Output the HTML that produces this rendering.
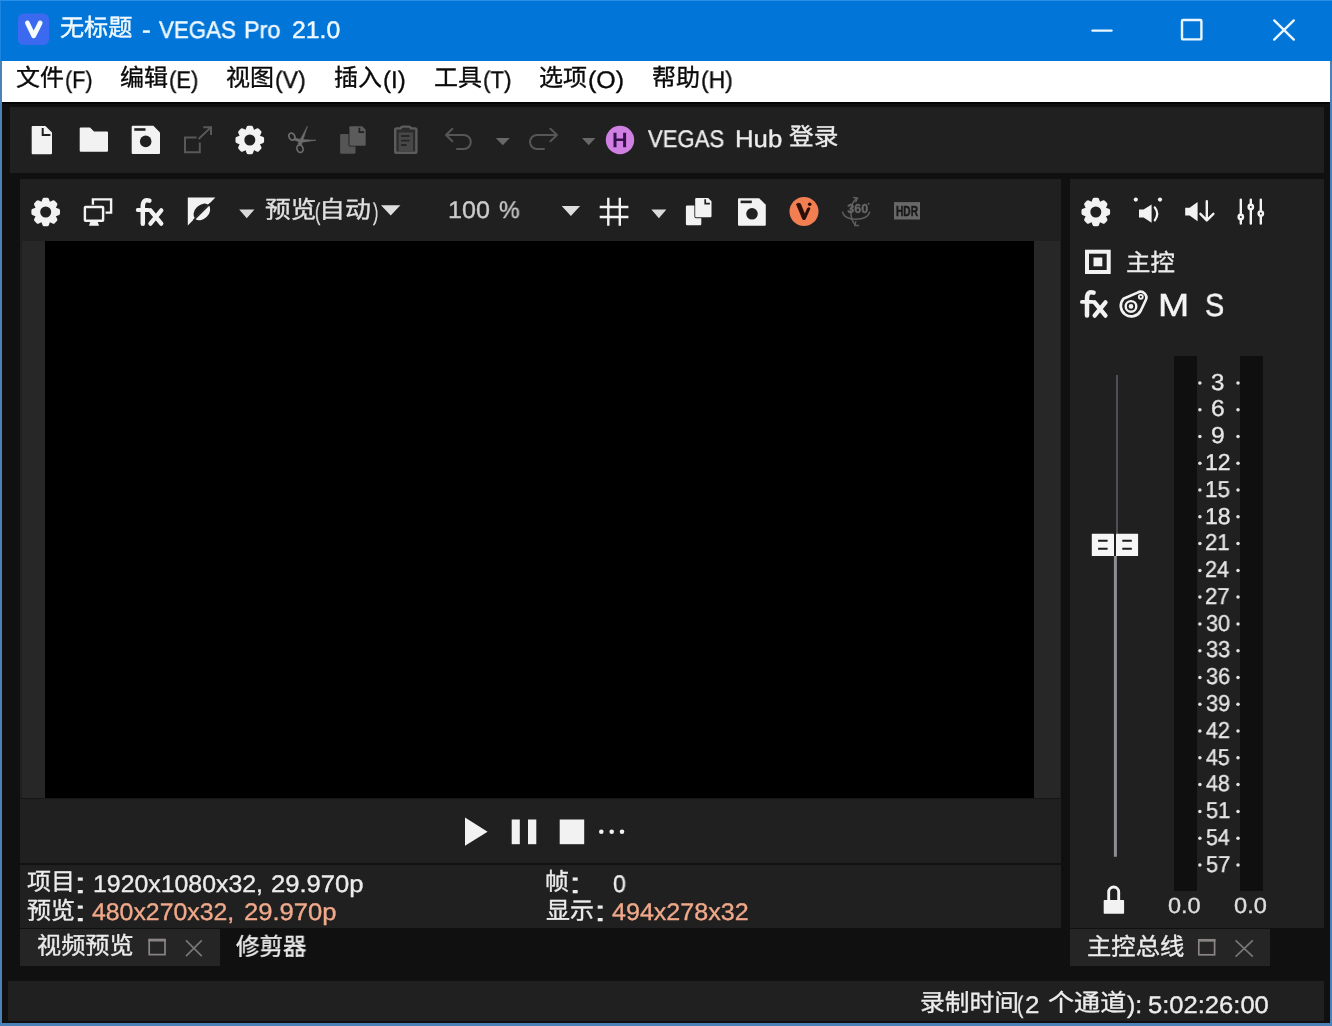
<!DOCTYPE html>
<html lang="zh-CN"><head><meta charset="utf-8"><title>无标题 - VEGAS Pro 21.0</title>
<style>
html,body{margin:0;padding:0;}
body{width:1332px;height:1026px;overflow:hidden;background:#4a81b6;position:relative;font-family:"Liberation Sans",sans-serif;}
#win{position:absolute;left:0;top:0;width:1332px;height:1026px;overflow:hidden;}
.abs,.t,.c,#icons{position:absolute;}
.t{white-space:pre;transform-origin:0 0;display:block;will-change:transform;text-rendering:geometricPrecision;font-kerning:none;-webkit-text-stroke:0.35px currentColor;}
.k{font-family:"Liberation Sans","Noto Sans CJK SC",sans-serif;font-size:24px;line-height:24px;}
.c{display:block;overflow:visible;}
#icons{will-change:transform;}
#titlebar{left:0;top:0;width:1332px;height:61px;background:#0276d8;box-shadow:inset 0 1px 0 #2a8fe6, inset 1px 0 0 #1a86e0;}
#menubar{left:2px;top:61px;width:1327.5px;height:41px;background:#fff;}
#client{left:2px;top:102px;width:1327.5px;height:921px;background:#101010;}
.panel{background:#202020;}
.strip{background:#272727;}
.tab{background:#252525;}
.trk{background:#0f0f0f;}
</style></head><body><div id="win">

<div id="titlebar" class="abs"></div>
<div id="menubar" class="abs"></div>
<div id="client" class="abs"></div>
<div class="abs" style="left:2px;top:102px;width:1327.5px;height:2px;background:#050505"></div>
<div id="maintoolbar" class="abs panel" style="left:10px;top:107px;width:1314px;height:66px"></div>
<div id="preview" class="abs panel" style="left:20px;top:179px;width:1041px;height:749px"></div>
<div class="abs strip" style="left:22px;top:241px;width:1037.5px;height:557px"></div>
<div class="abs" style="left:20px;top:798px;width:1041px;height:1px;background:#171717"></div>
<div id="screen" class="abs" style="left:45px;top:241px;width:989px;height:557px;background:#000"></div>
<div class="abs" style="left:20px;top:863px;width:1041px;height:2px;background:#121212"></div>
<div class="abs tab" style="left:20px;top:929px;width:200px;height:37px"></div>
<div id="master" class="abs panel" style="left:1070px;top:179px;width:254px;height:749px"></div>
<div class="abs tab" style="left:1070px;top:929px;width:200px;height:37px"></div>
<div class="abs trk" style="left:1174px;top:356px;width:23px;height:535px"></div>
<div class="abs trk" style="left:1240px;top:356px;width:23px;height:535px"></div>
<div id="statusbar" class="abs panel" style="left:8px;top:981px;width:1316px;height:40px"></div>
<svg id="icons" width="1332" height="1026" viewBox="0 0 1332 1026" style="left:0;top:0">
<rect x="18" y="13.6" width="31" height="31.4" rx="5.5" fill="#3b69f0"/>
<path d="M27.4,22.9 L33.7,35.9 L40.2,22.9" fill="none" stroke="#f4fcff" stroke-width="4.7" stroke-linecap="round" stroke-linejoin="round"/>
<g stroke="#eaf6ff" stroke-width="2.4" fill="none" stroke-linecap="round"><path d="M1092.5,30.6 H1111.5"/><rect x="1182" y="20" width="19.4" height="19.4" rx="1"/><path d="M1274.2,20.4 L1293.8,39.6 M1293.8,20.4 L1274.2,39.6"/></g>
<path d="M32.7,125.9 H45.4 L52,132.4 V153.2 Q52,154.2 51,154.2 H32.7 Q31.7,154.2 31.7,153.2 V126.9 Q31.7,125.9 32.7,125.9 Z" fill="#f2f2f2"/>
<path d="M42.7,128 V135 H50.4" fill="none" stroke="#202020" stroke-width="2"/>
<path d="M80.7,127.5 H90 L94,131.4 H107 Q108,131.4 108,132.4 V150.7 Q108,151.7 107,151.7 H80.7 Q79.7,151.7 79.7,150.7 V128.5 Q79.7,127.5 80.7,127.5 Z" fill="#f2f2f2"/>
<path d="M132.7,125.8 H153.4 L160.0,132.4 V153.1 Q160.0,154.1 159.0,154.1 H132.7 Q131.7,154.1 131.7,153.1 V126.8 Q131.7,125.8 132.7,125.8 Z" fill="#f2f2f2"/><rect x="134.29999999999998" y="128.2" width="11.2" height="2.6" fill="#202020"/><circle cx="145.7" cy="141.4" r="5.8" fill="#202020"/>
<g fill="none" stroke="#585858" stroke-width="2"><path d="M196.5,137.6 H185 V152.2 H199.8 V142.6"/><path d="M198.6,139 L210.6,127.6 M203.2,127.2 H211 V135"/></g>
<g transform="translate(249.8,140)" fill="#f2f2f2"><circle r="9.9"/><path transform="rotate(0.0)" d="M-5.20,-7.40 L-3.20,-12.90 Q-2.90,-14.30 -1.50,-14.30 H1.50 Q2.90,-14.30 3.20,-12.90 L5.20,-7.40 Z"/><path transform="rotate(45.0)" d="M-5.20,-7.40 L-3.20,-12.90 Q-2.90,-14.30 -1.50,-14.30 H1.50 Q2.90,-14.30 3.20,-12.90 L5.20,-7.40 Z"/><path transform="rotate(90.0)" d="M-5.20,-7.40 L-3.20,-12.90 Q-2.90,-14.30 -1.50,-14.30 H1.50 Q2.90,-14.30 3.20,-12.90 L5.20,-7.40 Z"/><path transform="rotate(135.0)" d="M-5.20,-7.40 L-3.20,-12.90 Q-2.90,-14.30 -1.50,-14.30 H1.50 Q2.90,-14.30 3.20,-12.90 L5.20,-7.40 Z"/><path transform="rotate(180.0)" d="M-5.20,-7.40 L-3.20,-12.90 Q-2.90,-14.30 -1.50,-14.30 H1.50 Q2.90,-14.30 3.20,-12.90 L5.20,-7.40 Z"/><path transform="rotate(225.0)" d="M-5.20,-7.40 L-3.20,-12.90 Q-2.90,-14.30 -1.50,-14.30 H1.50 Q2.90,-14.30 3.20,-12.90 L5.20,-7.40 Z"/><path transform="rotate(270.0)" d="M-5.20,-7.40 L-3.20,-12.90 Q-2.90,-14.30 -1.50,-14.30 H1.50 Q2.90,-14.30 3.20,-12.90 L5.20,-7.40 Z"/><path transform="rotate(315.0)" d="M-5.20,-7.40 L-3.20,-12.90 Q-2.90,-14.30 -1.50,-14.30 H1.50 Q2.90,-14.30 3.20,-12.90 L5.20,-7.40 Z"/><circle r="5.5" fill="#202020"/></g>
<g fill="none" stroke="#6c6c6c" stroke-width="1.7"><ellipse cx="291.9" cy="136.6" rx="2.8" ry="3.6" transform="rotate(-25 291.9 136.6)"/><ellipse cx="300" cy="148.7" rx="3" ry="3.8" transform="rotate(-20 300 148.7)"/></g><path d="M297.9,144 L307.4,126.2 L301.2,145.4 Z M294.4,138 L301.2,139.6 L316,140.2 L300.6,142.4 L294,140 Z" fill="#6c6c6c" stroke="#6c6c6c" stroke-width="0.6" stroke-linejoin="round"/>
<rect x="340.1" y="133.9" width="15.4" height="19.8" rx="1.2" fill="#555"/><path d="M350.40000000000003,126.3 H362.3 L365.70000000000005,129.7 V144.7 Q365.70000000000005,145.7 364.70000000000005,145.7 H350.40000000000003 Q349.40000000000003,145.7 349.40000000000003,144.7 V127.3 Q349.40000000000003,126.3 350.40000000000003,126.3 Z" fill="#5b5b5b" stroke="#202020" stroke-width="1.7" paint-order="stroke"/><path d="M359.40000000000003,127.7 V132.1 H364.1" fill="none" stroke="#202020" stroke-width="1.7"/>
<path d="M396.6,128.4 H400.6 Q401,126.6 403,126.6 H408.6 Q410.6,126.6 411,128.4 H415 Q416.4,128.4 416.4,129.8 V151.4 Q416.4,152.8 415,152.8 H396.6 Q395.2,152.8 395.2,151.4 V129.8 Q395.2,128.4 396.6,128.4 Z" fill="#2c2c2c" stroke="#5c5c5c" stroke-width="2.4"/><rect x="398.6" y="132.4" width="14.4" height="18.6" fill="#474747"/><path d="M401,136 H409.6 M401,140.6 H409.6 M401,145 H406.4" stroke="#262626" stroke-width="1.8" fill="none"/>
<g fill="none" stroke="#565656" stroke-width="2" stroke-linecap="round" stroke-linejoin="round"><path d="M446,135 H463.8 A7,7 0 0 1 463.8,149 H457 M452.4,128.8 L446,135 L452.4,141.2"/><path d="M557,135 H537 A7,7 0 0 0 537,149 H544 M550.4,128.8 L557,135 L550.4,141.2"/></g>
<path d="M495.8,138 H509.8 L502.8,145.2 Z M582,138 H595.4 L588.7,145.2 Z" fill="#686868"/>
<circle cx="620" cy="140" r="14.2" fill="#cf80e2"/>
<path d="M613.5,132.7 h3 v5.8 h6.6 v-5.8 h3 v14.5 h-3 v-6.1 h-6.6 v6.1 h-3 Z" fill="#35104c"/>
<g transform="translate(45.7,212)" fill="#f2f2f2"><circle r="9.9"/><path transform="rotate(0.0)" d="M-5.20,-7.40 L-3.20,-12.90 Q-2.90,-14.30 -1.50,-14.30 H1.50 Q2.90,-14.30 3.20,-12.90 L5.20,-7.40 Z"/><path transform="rotate(45.0)" d="M-5.20,-7.40 L-3.20,-12.90 Q-2.90,-14.30 -1.50,-14.30 H1.50 Q2.90,-14.30 3.20,-12.90 L5.20,-7.40 Z"/><path transform="rotate(90.0)" d="M-5.20,-7.40 L-3.20,-12.90 Q-2.90,-14.30 -1.50,-14.30 H1.50 Q2.90,-14.30 3.20,-12.90 L5.20,-7.40 Z"/><path transform="rotate(135.0)" d="M-5.20,-7.40 L-3.20,-12.90 Q-2.90,-14.30 -1.50,-14.30 H1.50 Q2.90,-14.30 3.20,-12.90 L5.20,-7.40 Z"/><path transform="rotate(180.0)" d="M-5.20,-7.40 L-3.20,-12.90 Q-2.90,-14.30 -1.50,-14.30 H1.50 Q2.90,-14.30 3.20,-12.90 L5.20,-7.40 Z"/><path transform="rotate(225.0)" d="M-5.20,-7.40 L-3.20,-12.90 Q-2.90,-14.30 -1.50,-14.30 H1.50 Q2.90,-14.30 3.20,-12.90 L5.20,-7.40 Z"/><path transform="rotate(270.0)" d="M-5.20,-7.40 L-3.20,-12.90 Q-2.90,-14.30 -1.50,-14.30 H1.50 Q2.90,-14.30 3.20,-12.90 L5.20,-7.40 Z"/><path transform="rotate(315.0)" d="M-5.20,-7.40 L-3.20,-12.90 Q-2.90,-14.30 -1.50,-14.30 H1.50 Q2.90,-14.30 3.20,-12.90 L5.20,-7.40 Z"/><circle r="5.5" fill="#202020"/></g>
<g fill="none" stroke="#f2f2f2" stroke-width="2.4"><rect x="84.9" y="207" width="18.2" height="13.8" rx="0.6"/><path d="M92.9,204.8 V199.4 H111.1 V212.6 H105.6"/></g><path d="M90.4,221.5 H97.6 L99,225.8 H89 Z" fill="#f2f2f2"/>
<g transform="translate(0,0)" fill="none" stroke="#f2f2f2" stroke-linecap="round" stroke-linejoin="round"><path d="M149.4,200.7 Q143,198.7 142.8,206 V223.7" stroke-width="4.5"/><path d="M137.7,210 H148.2" stroke-width="3.8"/><path d="M150.4,210.4 L161.3,223.7 M161.3,210.4 L150.4,223.7" stroke-width="4.3"/></g>
<path fill-rule="evenodd" fill="#f2f2f2" d="M187.8,197.6 H215.4 L187.8,225.4 Z M208.69,205.11 A9.6,6.9 -45 1 0 195.11,218.69 A9.6,6.9 -45 1 0 208.69,205.11 Z"/><path d="M210.2,203.6 L193.6,220.2" stroke="#202020" stroke-width="1.5"/>
<path d="M239.2,209.6 H254.4 L246.8,218.2 Z M651.4,209.6 H666.4 L658.9,218.2 Z" fill="#dadada"/>
<path d="M381,205.3 H400.4 L390.7,215.4 Z M561.7,206 H580.1 L570.9,216 Z" fill="#dedede"/>
<path d="M608.3,197.8 V225.8 M619.8,197.8 V225.8 M599.7,207 H628.4 M599.7,217 H628.4" stroke="#f2f2f2" stroke-width="2.4" fill="none"/>
<rect x="685.9" y="205.5" width="15.4" height="19.8" rx="1.2" fill="#f2f2f2"/><path d="M696.1999999999999,197.9 H708.1 L711.5,201.3 V216.3 Q711.5,217.3 710.5,217.3 H696.1999999999999 Q695.1999999999999,217.3 695.1999999999999,216.3 V198.9 Q695.1999999999999,197.9 696.1999999999999,197.9 Z" fill="#f2f2f2" stroke="#202020" stroke-width="1.7" paint-order="stroke"/><path d="M705.1999999999999,199.3 V203.70000000000002 H709.9" fill="none" stroke="#202020" stroke-width="1.7"/>
<path d="M739,198.2 H759.1999999999999 L765.8,204.79999999999998 V224.7 Q765.8,225.7 764.8,225.7 H739 Q738,225.7 738,224.7 V199.2 Q738,198.2 739,198.2 Z" fill="#f2f2f2"/><rect x="740.6" y="200.6" width="11.2" height="2.6" fill="#202020"/><circle cx="752" cy="213.79999999999998" r="5.8" fill="#202020"/>
<circle cx="804" cy="211.6" r="14.5" fill="#f27f52"/>
<path d="M796.5,204.2 Q798.4,202.6 800.4,203.8 L804.8,214.6 L807.6,208.2 Q808.8,207 810,208.4 L805.2,219.2 Q804,220.2 802.8,219.2 Z" fill="#2a0f08" stroke="#2a0f08" stroke-width="0.9" stroke-linejoin="round"/><circle cx="809.7" cy="204.3" r="1.8" fill="#2a0f08"/>
<g fill="none" stroke="#5e5e5e" stroke-width="1.5" stroke-linecap="round" stroke-linejoin="round"><path d="M842.6,212.2 Q844.4,219 855.8,219.2 Q867.6,219 869.6,212.2"/><path d="M856.4,198.6 Q850.6,203.6 850.8,212 Q851,220.4 855.2,224.8"/><path d="M853.6,197.6 L857.6,198 L855.8,201.6 M858.4,225.6 L854.6,225.4 L855.8,221.8"/></g><circle cx="868.6" cy="203.8" r="1" fill="#5e5e5e"/>
<text x="857.8" y="213.4" font-family="Liberation Sans, sans-serif" font-weight="700" font-size="12" fill="#666" stroke="#666" stroke-width="0.3" text-anchor="middle" textLength="21" lengthAdjust="spacingAndGlyphs">360</text>
<rect x="894" y="202.1" width="26" height="17.4" fill="#686868"/>
<text x="907" y="215.8" font-family="Liberation Sans, sans-serif" font-weight="700" font-size="14" fill="#1a1a1a" stroke="#1a1a1a" stroke-width="0.5" text-anchor="middle" textLength="22" lengthAdjust="spacingAndGlyphs">HDR</text>
<g transform="translate(1095.8,212)" fill="#f2f2f2"><circle r="9.9"/><path transform="rotate(0.0)" d="M-5.20,-7.40 L-3.20,-12.90 Q-2.90,-14.30 -1.50,-14.30 H1.50 Q2.90,-14.30 3.20,-12.90 L5.20,-7.40 Z"/><path transform="rotate(45.0)" d="M-5.20,-7.40 L-3.20,-12.90 Q-2.90,-14.30 -1.50,-14.30 H1.50 Q2.90,-14.30 3.20,-12.90 L5.20,-7.40 Z"/><path transform="rotate(90.0)" d="M-5.20,-7.40 L-3.20,-12.90 Q-2.90,-14.30 -1.50,-14.30 H1.50 Q2.90,-14.30 3.20,-12.90 L5.20,-7.40 Z"/><path transform="rotate(135.0)" d="M-5.20,-7.40 L-3.20,-12.90 Q-2.90,-14.30 -1.50,-14.30 H1.50 Q2.90,-14.30 3.20,-12.90 L5.20,-7.40 Z"/><path transform="rotate(180.0)" d="M-5.20,-7.40 L-3.20,-12.90 Q-2.90,-14.30 -1.50,-14.30 H1.50 Q2.90,-14.30 3.20,-12.90 L5.20,-7.40 Z"/><path transform="rotate(225.0)" d="M-5.20,-7.40 L-3.20,-12.90 Q-2.90,-14.30 -1.50,-14.30 H1.50 Q2.90,-14.30 3.20,-12.90 L5.20,-7.40 Z"/><path transform="rotate(270.0)" d="M-5.20,-7.40 L-3.20,-12.90 Q-2.90,-14.30 -1.50,-14.30 H1.50 Q2.90,-14.30 3.20,-12.90 L5.20,-7.40 Z"/><path transform="rotate(315.0)" d="M-5.20,-7.40 L-3.20,-12.90 Q-2.90,-14.30 -1.50,-14.30 H1.50 Q2.90,-14.30 3.20,-12.90 L5.20,-7.40 Z"/><circle r="5.5" fill="#202020"/></g>
<path d="M1139,209.6 H1143.6 L1151.6,204.6 V222.8 L1143.6,217.6 H1139 Z" fill="#f2f2f2"/><path d="M1154.8,207.4 Q1159.6,213.8 1154.8,220.4" fill="none" stroke="#f2f2f2" stroke-width="2.3" stroke-linecap="round"/><circle cx="1135.8" cy="199.6" r="2.1" fill="#f2f2f2"/><circle cx="1160" cy="199.6" r="2.1" fill="#f2f2f2"/>
<path d="M1185.2,207.8 H1189.6 L1197.6,202 V221.2 L1189.6,215.6 H1185.2 Z" fill="#f2f2f2"/><path d="M1206.8,201.2 V220 M1200.4,213.8 L1206.8,220.4 L1213.4,213.8" fill="none" stroke="#f2f2f2" stroke-width="2.4" stroke-linecap="round" stroke-linejoin="round"/>
<g stroke="#f2f2f2" stroke-width="2.4" fill="#202020"><path d="M1240.8,199.6 V223.6 M1250.8,199.6 V223.6 M1260.8,199.6 V223.6" stroke-linecap="round"/><circle cx="1240.8" cy="217" r="2.2"/><circle cx="1250.8" cy="207" r="2.2"/><circle cx="1260.8" cy="213.6" r="2.2"/></g>
<rect x="1087" y="251.7" width="21.7" height="20.3" fill="none" stroke="#f2f2f2" stroke-width="4"/><rect x="1093.5" y="257.5" width="8.8" height="8.8" fill="#f2f2f2"/>
<g transform="translate(944.2,91.9)" fill="none" stroke="#f2f2f2" stroke-linecap="round" stroke-linejoin="round"><path d="M149.4,200.7 Q143,198.7 142.8,206 V223.7" stroke-width="4.5"/><path d="M137.7,210 H148.2" stroke-width="3.8"/><path d="M150.4,210.4 L161.3,223.7 M161.3,210.4 L150.4,223.7" stroke-width="4.3"/></g>
<g fill="none" stroke="#f2f2f2" stroke-width="2.4"><path d="M1123.4,298.8 L1137.6,292.6 A5.8,5.8 0 0 1 1145.6,300.4 L1140.6,311 A10.6,10.6 0 1 1 1123.4,298.8 Z" stroke-linejoin="round" stroke-width="2.6"/><circle cx="1131" cy="306.4" r="5.3"/><circle cx="1140.8" cy="296.8" r="2" stroke-width="1.8"/></g><circle cx="1131" cy="306.4" r="2.3" fill="#f2f2f2"/>
<path d="M1117,375 V534" stroke="#4e4e54" stroke-width="2"/><path d="M1115.4,556 V856.8" stroke="#8e8e92" stroke-width="3"/>
<rect x="1091.8" y="533.8" width="22.2" height="22.2" rx="0.6" fill="#f6f6f6"/><rect x="1116" y="533.8" width="22.1" height="22.2" rx="0.6" fill="#f6f6f6"/><path d="M1098.1,540.8 H1107.6 M1098.1,548.8 H1107.6 M1122.3,540.8 H1131.8 M1122.3,548.8 H1131.8" stroke="#1c1c1c" stroke-width="2.1"/>
<g fill="#e2e2e2"><circle cx="1199.9" cy="382.9" r="1.75"/><circle cx="1238" cy="382.9" r="1.75"/><circle cx="1199.9" cy="409.7" r="1.75"/><circle cx="1238" cy="409.7" r="1.75"/><circle cx="1199.9" cy="436.5" r="1.75"/><circle cx="1238" cy="436.5" r="1.75"/><circle cx="1199.9" cy="463.2" r="1.75"/><circle cx="1238" cy="463.2" r="1.75"/><circle cx="1199.9" cy="490.0" r="1.75"/><circle cx="1238" cy="490.0" r="1.75"/><circle cx="1199.9" cy="516.8" r="1.75"/><circle cx="1238" cy="516.8" r="1.75"/><circle cx="1199.9" cy="543.6" r="1.75"/><circle cx="1238" cy="543.6" r="1.75"/><circle cx="1199.9" cy="570.4" r="1.75"/><circle cx="1238" cy="570.4" r="1.75"/><circle cx="1199.9" cy="597.1" r="1.75"/><circle cx="1238" cy="597.1" r="1.75"/><circle cx="1199.9" cy="623.9" r="1.75"/><circle cx="1238" cy="623.9" r="1.75"/><circle cx="1199.9" cy="650.7" r="1.75"/><circle cx="1238" cy="650.7" r="1.75"/><circle cx="1199.9" cy="677.5" r="1.75"/><circle cx="1238" cy="677.5" r="1.75"/><circle cx="1199.9" cy="704.3" r="1.75"/><circle cx="1238" cy="704.3" r="1.75"/><circle cx="1199.9" cy="731.0" r="1.75"/><circle cx="1238" cy="731.0" r="1.75"/><circle cx="1199.9" cy="757.8" r="1.75"/><circle cx="1238" cy="757.8" r="1.75"/><circle cx="1199.9" cy="784.6" r="1.75"/><circle cx="1238" cy="784.6" r="1.75"/><circle cx="1199.9" cy="811.4" r="1.75"/><circle cx="1238" cy="811.4" r="1.75"/><circle cx="1199.9" cy="838.2" r="1.75"/><circle cx="1238" cy="838.2" r="1.75"/><circle cx="1199.9" cy="864.9" r="1.75"/><circle cx="1238" cy="864.9" r="1.75"/></g>
<rect x="1103.7" y="900" width="20.4" height="13.8" rx="0.8" fill="#f2f2f2"/><path d="M1108.7,900.5 V892 A5,5 0 0 1 1118.7,892 V900.5" fill="none" stroke="#f2f2f2" stroke-width="2.9"/>
<path d="M465,817.6 L487.6,831.7 L465,845.8 Z" fill="#f2f2f2"/><rect x="511.7" y="819.5" width="8.1" height="24.7" fill="#f2f2f2"/><rect x="528" y="819.5" width="8.3" height="24.7" fill="#f2f2f2"/><rect x="559.7" y="819.5" width="24.5" height="24.7" fill="#f2f2f2"/><circle cx="601.3" cy="831.7" r="2.3" fill="#f2f2f2"/><circle cx="611.7" cy="831.7" r="2.3" fill="#f2f2f2"/><circle cx="622" cy="831.7" r="2.3" fill="#f2f2f2"/>
<g fill="none" stroke-width="1.7"><rect x="149.2" y="939.6" width="15.8" height="15" stroke="#8a8484"/><path d="M148.4,940.2 H165.8" stroke="#8a8484" stroke-width="2.6"/><path d="M186,940.4 L201.8,956.2 M201.8,940.4 L186,956.2" stroke="#777"/><rect x="1198.8" y="939.8" width="15.8" height="15" stroke="#8a8484"/><path d="M1198,940.4 H1215.4" stroke="#8a8484" stroke-width="2.6"/><path d="M1235.6,940.4 L1252.8,956.6 M1252.8,940.4 L1235.6,956.6" stroke="#777"/></g>
</svg>
<span class="t k" style="left:59.56px;top:17.24px;color:#eef8ff;transform:scaleX(1.0046);-webkit-text-stroke:0.45px currentColor;">无标题</span>
<span class="t" style="left:142.44px;top:19.18px;font-size:24px;line-height:24px;color:#eef8ff;transform:scaleX(1.0923);-webkit-text-stroke:0.45px currentColor;">-</span><span class="t" style="left:158.90px;top:19.18px;font-size:24px;line-height:24px;color:#eef8ff;transform:scaleX(0.9289);-webkit-text-stroke:0.45px currentColor;">VEGAS</span><span class="t" style="left:244.28px;top:19.18px;font-size:24px;line-height:24px;color:#eef8ff;transform:scaleX(0.9747);-webkit-text-stroke:0.45px currentColor;">Pro</span><span class="t" style="left:292.15px;top:19.18px;font-size:24px;line-height:24px;color:#eef8ff;transform:scaleX(1.0322);-webkit-text-stroke:0.45px currentColor;">21.0</span>
<span class="t k" style="left:15.64px;top:67.34px;color:#0a0a0a;">文件</span>
<span class="t" style="left:64.57px;top:69.28px;font-size:24px;line-height:24px;color:#0a0a0a;transform:scaleX(0.8963);-webkit-text-stroke:0.35px currentColor;">(F)</span>
<span class="t k" style="left:120.09px;top:67.34px;color:#0a0a0a;">编辑</span>
<span class="t" style="left:169.04px;top:69.28px;font-size:24px;line-height:24px;color:#0a0a0a;transform:scaleX(0.9167);-webkit-text-stroke:0.35px currentColor;">(E)</span>
<span class="t k" style="left:225.86px;top:67.34px;color:#0a0a0a;">视图</span>
<span class="t" style="left:274.77px;top:69.28px;font-size:24px;line-height:24px;color:#0a0a0a;transform:scaleX(0.9581);-webkit-text-stroke:0.35px currentColor;">(V)</span>
<span class="t k" style="left:334.11px;top:67.34px;color:#0a0a0a;">插入</span>
<span class="t" style="left:382.92px;top:69.28px;font-size:24px;line-height:24px;color:#0a0a0a;transform:scaleX(0.9961);-webkit-text-stroke:0.35px currentColor;">(I)</span>
<span class="t k" style="left:433.75px;top:67.34px;color:#0a0a0a;">工具</span>
<span class="t" style="left:483.02px;top:69.28px;font-size:24px;line-height:24px;color:#0a0a0a;transform:scaleX(0.9253);-webkit-text-stroke:0.35px currentColor;">(T)</span>
<span class="t k" style="left:538.92px;top:67.34px;color:#0a0a0a;">选项</span>
<span class="t" style="left:587.85px;top:69.28px;font-size:24px;line-height:24px;color:#0a0a0a;transform:scaleX(1.0386);-webkit-text-stroke:0.35px currentColor;">(O)</span>
<span class="t k" style="left:652.00px;top:67.34px;color:#0a0a0a;">帮助</span>
<span class="t" style="left:701.18px;top:69.28px;font-size:24px;line-height:24px;color:#0a0a0a;transform:scaleX(0.9558);-webkit-text-stroke:0.35px currentColor;">(H)</span>
<span class="t" style="left:647.50px;top:128.38px;font-size:24px;line-height:24px;color:#ececec;transform:scaleX(0.9203);">VEGAS</span><span class="t" style="left:734.69px;top:128.38px;font-size:24px;line-height:24px;color:#ececec;transform:scaleX(1.0718);">Hub</span>
<span class="t k" style="left:789.36px;top:126.44px;color:#ececec;transform:scaleX(1.0271);">登录</span>
<span class="t k" style="left:264.72px;top:198.74px;color:#e0e0e0;transform:scaleX(1.0708);">预览</span>
<span class="t" style="left:315.02px;top:200.88px;font-size:24px;line-height:24px;color:#e0e0e0;transform:scaleX(0.6600);">(</span>
<span class="t k" style="left:319.46px;top:198.74px;color:#e0e0e0;transform:scaleX(1.0825);">自动</span>
<span class="t" style="left:372.71px;top:200.88px;font-size:24px;line-height:24px;color:#e0e0e0;transform:scaleX(0.6600);">)</span>
<span class="t" style="left:447.89px;top:198.68px;font-size:24px;line-height:24px;color:#cbcbcb;transform:scaleX(1.0462);">100</span><span class="t" style="left:499.17px;top:198.68px;font-size:24px;line-height:24px;color:#cbcbcb;transform:scaleX(0.9680);">%</span>
<span class="t k" style="left:1126.33px;top:251.74px;color:#ececec;transform:scaleX(1.0177);">主控</span>
<span class="t" style="left:1158.13px;top:288.71px;font-size:32px;line-height:32px;color:#f4f4f4;transform:scaleX(1.1679);-webkit-text-stroke:0.5px currentColor;">M</span>
<span class="t" style="left:1204.69px;top:288.91px;font-size:32px;line-height:32px;color:#f4f4f4;transform:scaleX(0.9011);-webkit-text-stroke:0.5px currentColor;">S</span>
<span class="t" style="left:1210.98px;top:370.63px;font-size:23px;line-height:23px;color:#e6e6e6;transform:scaleX(1.0454);">3</span>
<span class="t" style="left:1210.65px;top:397.41px;font-size:23px;line-height:23px;color:#e6e6e6;transform:scaleX(1.0742);">6</span>
<span class="t" style="left:1210.74px;top:424.19px;font-size:23px;line-height:23px;color:#e6e6e6;transform:scaleX(1.0730);">9</span>
<span class="t" style="left:1204.67px;top:450.97px;font-size:23px;line-height:23px;color:#e6e6e6;transform:scaleX(0.9879);">12</span>
<span class="t" style="left:1204.68px;top:477.75px;font-size:23px;line-height:23px;color:#e6e6e6;transform:scaleX(0.9797);">15</span>
<span class="t" style="left:1204.68px;top:504.53px;font-size:23px;line-height:23px;color:#e6e6e6;transform:scaleX(0.9811);">18</span>
<span class="t" style="left:1205.29px;top:531.31px;font-size:23px;line-height:23px;color:#e6e6e6;transform:scaleX(0.9612);">21</span>
<span class="t" style="left:1205.31px;top:558.09px;font-size:23px;line-height:23px;color:#e6e6e6;transform:scaleX(0.9431);">24</span>
<span class="t" style="left:1205.29px;top:584.87px;font-size:23px;line-height:23px;color:#e6e6e6;transform:scaleX(0.9626);">27</span>
<span class="t" style="left:1205.58px;top:611.65px;font-size:23px;line-height:23px;color:#e6e6e6;transform:scaleX(0.9408);">30</span>
<span class="t" style="left:1205.57px;top:638.43px;font-size:23px;line-height:23px;color:#e6e6e6;transform:scaleX(0.9453);">33</span>
<span class="t" style="left:1205.57px;top:665.21px;font-size:23px;line-height:23px;color:#e6e6e6;transform:scaleX(0.9453);">36</span>
<span class="t" style="left:1205.57px;top:691.99px;font-size:23px;line-height:23px;color:#e6e6e6;transform:scaleX(0.9484);">39</span>
<span class="t" style="left:1205.91px;top:718.77px;font-size:23px;line-height:23px;color:#e6e6e6;transform:scaleX(0.9373);">42</span>
<span class="t" style="left:1205.91px;top:745.55px;font-size:23px;line-height:23px;color:#e6e6e6;transform:scaleX(0.9299);">45</span>
<span class="t" style="left:1205.91px;top:772.33px;font-size:23px;line-height:23px;color:#e6e6e6;transform:scaleX(0.9312);">48</span>
<span class="t" style="left:1205.52px;top:799.11px;font-size:23px;line-height:23px;color:#e6e6e6;transform:scaleX(0.9516);">51</span>
<span class="t" style="left:1205.54px;top:825.89px;font-size:23px;line-height:23px;color:#e6e6e6;transform:scaleX(0.9338);">54</span>
<span class="t" style="left:1205.52px;top:852.67px;font-size:23px;line-height:23px;color:#e6e6e6;transform:scaleX(0.9530);">57</span>
<span class="t" style="left:1168.48px;top:895.38px;font-size:22px;line-height:22px;color:#dcdcdc;transform:scaleX(1.0671);">0.0</span>
<span class="t" style="left:1234.08px;top:895.38px;font-size:22px;line-height:22px;color:#dcdcdc;transform:scaleX(1.0740);">0.0</span>
<span class="t k" style="left:27.20px;top:871.44px;color:#ececec;">项目</span>
<span class="t" style="left:73.88px;top:869.65px;font-size:29px;line-height:29px;color:#ececec;transform:scaleX(1.5573);">:</span>
<span class="t" style="left:93.31px;top:873.28px;font-size:24px;line-height:24px;color:#ececec;transform:scaleX(1.0352);">1920x1080x32,</span><span class="t" style="left:271.31px;top:873.28px;font-size:24px;line-height:24px;color:#ececec;transform:scaleX(1.0670);">29.970p</span>
<span class="t k" style="left:27.49px;top:899.64px;color:#ececec;">预览</span>
<span class="t" style="left:73.88px;top:897.85px;font-size:29px;line-height:29px;color:#ececec;transform:scaleX(1.5573);">:</span>
<span class="t" style="left:92.03px;top:901.48px;font-size:24px;line-height:24px;color:#f0a98a;transform:scaleX(1.0346);">480x270x32,</span><span class="t" style="left:244.11px;top:901.48px;font-size:24px;line-height:24px;color:#f0a98a;transform:scaleX(1.0670);">29.970p</span>
<span class="t k" style="left:545.18px;top:871.44px;color:#ececec;">帧</span>
<span class="t" style="left:569.37px;top:869.65px;font-size:29px;line-height:29px;color:#ececec;transform:scaleX(1.5211);">:</span>
<span class="t" style="left:612.70px;top:873.28px;font-size:24px;line-height:24px;color:#ececec;transform:scaleX(0.9588);">0</span>
<span class="t k" style="left:546.04px;top:899.64px;color:#ececec;">显示</span>
<span class="t" style="left:593.57px;top:897.85px;font-size:29px;line-height:29px;color:#ececec;transform:scaleX(1.5211);">:</span>
<span class="t" style="left:611.82px;top:901.48px;font-size:24px;line-height:24px;color:#f0a98a;transform:scaleX(1.0448);">494x278x32</span>
<span class="t k" style="left:36.56px;top:935.34px;color:#ececec;transform:scaleX(1.0069);">视频预览</span>
<span class="t k" style="left:236.23px;top:935.74px;color:#ececec;transform:scaleX(0.9782);">修剪器</span>
<span class="t k" style="left:1086.64px;top:935.74px;color:#ececec;transform:scaleX(1.0131);">主控总线</span>
<span class="t k" style="left:920.04px;top:992.14px;color:#ececec;transform:scaleX(1.0325);">录制时间</span>
<span class="t" style="left:1017.43px;top:993.88px;font-size:24px;line-height:24px;color:#ececec;transform:scaleX(0.7858);">(</span>
<span class="t" style="left:1025.10px;top:993.88px;font-size:24px;line-height:24px;color:#ececec;transform:scaleX(1.0792);">2</span>
<span class="t k" style="left:1047.99px;top:992.14px;color:#ececec;transform:scaleX(1.0876);">个通道</span>
<span class="t" style="left:1126.65px;top:993.88px;font-size:24px;line-height:24px;color:#ececec;transform:scaleX(1.0383);">):</span>
<span class="t" style="left:1148.38px;top:993.88px;font-size:24px;line-height:24px;color:#ececec;transform:scaleX(1.0651);">5:02:26:00</span>
</div></body></html>
